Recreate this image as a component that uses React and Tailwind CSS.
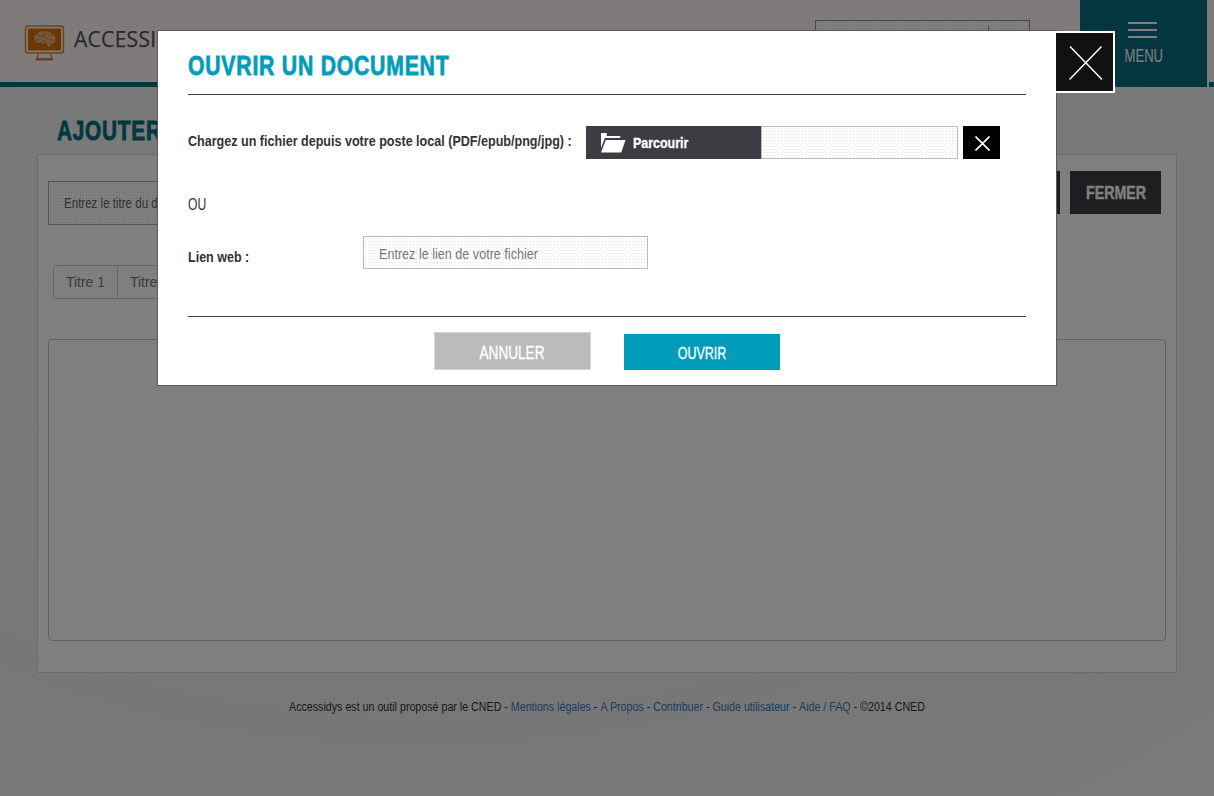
const N = "font-['Liberation_Sans',Arial,sans-serif]";

function T({ className = "", children }) {
  return <span className={`block w-fit whitespace-nowrap ${className}`}>{children}</span>;
}

function Header() {
  return (
    <header className="flex h-[87px] bg-[linear-gradient(#fff7f7_82px,#006c7d_82px)]">
      <div className="flex w-[815px] pl-6 pt-6">
        <svg width="41" height="38" viewBox="0 0 41 38" fill="none">
          <rect x="1.5" y="2" width="38" height="27" rx="2.5" stroke="#e08530" strokeWidth="1.5" />
          <rect x="4" y="4.500" width="33" height="22" fill="#d87000" />
          <path d="M14.500 29.500 13 35M26.500 29.500 28 35" stroke="#e08530" strokeWidth="1.3" />
          <path d="M12 34h17v2.500H12z" fill="#d98232" />
          <path d="M20 7.500c-4-1-6 1-7 3-3 1-4 4-2 6 1 3 4 3 6 2 2 2 4 1 5 0 1 2 2 4.500 4 4.500l1-3.500c3 0 5-2 4-4 1-3-1-5-3-5-1-2-4-4-8-3z" fill="#e0b48c" />
          <path d="M14 12c2-1 3 1 5 0M12 16c2-1 3 1 5-1M20 8.500v4c2 0 3 1 3 3M18 18.500c0-2 3-2 4-1M24 9.500c0 2 2 3 4 2M25 14.500c1 2 3 1 5 2M25 19.500l2-2" stroke="#d87000" strokeWidth=".9" />
        </svg>
        <span className="ml-[9px] mt-[3px] text-[21px] leading-[25px] tracking-[0.3px] text-[#54545c] font-['Open_Sans',sans-serif] [-webkit-text-stroke:0.25px]">ACCESSIDYS</span>
      </div>
      <div className="mt-5 flex h-9 w-[215px] border border-[#8c8c8c] bg-white bg-[radial-gradient(#e0e0e0_0.7px,transparent_0.8px)] bg-[size:3px_3px]">
        <div className="mt-1 h-6 w-[173px] border-r border-[#8c8c8c]" />
      </div>
      <div className="ml-[50px] flex w-[127px] flex-col items-center bg-[#066c80] pt-[22px]">
        <div className="mr-[2px] flex w-[29px] flex-col gap-[5px]">
          <i className="h-[2px] bg-white" /><i className="h-[2px] bg-white" /><i className="h-[2px] bg-white" />
        </div>
        <T className={`mt-[8px] scale-x-[.745] text-[17.5px] leading-[20px] text-white ${N}`}>MENU</T>
      </div>
      <div className="w-[2px] bg-[#fff7f7]" />
    </header>
  );
}

function Page() {
  return (
    <div className="h-[796px] w-[1214px] overflow-hidden bg-[radial-gradient(ellipse_at_35%_45%,#f7f7f7,#f3f3f3_40%,#efefef_60%,#f5f5f5)]">
      <Header />
      <h1 className={`ml-[57px] mt-[29px] h-[38px] w-fit origin-left scale-x-[.77] whitespace-nowrap text-[27px] font-bold leading-[31px] tracking-[1px] text-[#00717f] [-webkit-text-stroke:0.8px] ${N}`}>AJOUTER UN DOCUMENT</h1>
      <main className="ml-[37px] h-[519px] w-[1140px] border border-[#d4d4d4] bg-white">
        <div className="flex justify-between pl-[10px] pr-[15px] pt-[16px]">
          <div className={`mt-[10px] h-[44px] w-[500px] border border-[#aaa] bg-[radial-gradient(#e0e0e0_0.7px,transparent_0.8px)] bg-[size:3px_3px] pl-[15px] text-[15px] leading-[42px] text-[#666] ${N}`}>
            <T className="origin-left scale-x-[.77]">Entrez le titre du document</T>
          </div>
          <div className={`flex gap-[10px] text-[18px] font-bold leading-[44px] text-white ${N}`}>
            <div className="flex h-[43px] w-[140px] justify-center bg-[#3c3d42]"><T className="scale-x-[.79]">ENREGISTRER</T></div>
            <div className="flex h-[43px] w-[91px] justify-center bg-[#3c3d42]"><T className="scale-x-[.79] [-webkit-text-stroke:0.4px]">FERMER</T></div>
          </div>
        </div>
        <div className={`ml-[15px] mt-[40px] flex h-[34px] w-fit rounded-[4px] border border-[#ccc] text-[14px] leading-[32px] text-[#777] ${N}`}>
          <span className="w-[64px] border-r border-[#ccc] text-center">Titre 1</span>
          <span className="w-[64px] border-r border-[#ccc] text-center">Titre 2</span>
          <span className="w-[64px] text-center">Titre 3</span>
        </div>
        <div className="ml-[10px] mt-[40px] h-[302px] w-[1118px] rounded-[4px] border border-[#c2c2c2]" />
      </main>
      <footer className={`mt-[26px] flex scale-x-[.889] justify-center whitespace-pre text-[12px] leading-[16px] text-[#333] ${N}`}>
        Accessidys est un outil proposé par le CNED - <a className="text-[#337ab7]">Mentions légales</a> - <a className="text-[#337ab7]">A Propos</a> - <a className="text-[#337ab7]">Contribuer</a> - <a className="text-[#337ab7]">Guide utilisateur</a> - <a className="text-[#337ab7]">Aide / FAQ</a> - ©2014 CNED
      </footer>
    </div>
  );
}

function Modal() {
  return (
    <section className={`absolute left-[157px] top-[30px] h-[356px] w-[900px] border border-[#5b5959] bg-white bg-clip-padding px-[30px] text-[#333] ${N}`}>
      <button className="absolute left-[898px] top-0 flex h-[62px] w-[59px] items-center justify-center border-y-2 border-r-2 border-white bg-[#111] pl-[2px] pt-[2px]">
        <svg width="34" height="36" viewBox="0 0 34 36" stroke="#fff" strokeWidth="1.5"><path d="M1 1.500 33 34.500M32.500 1.500.5 34.500" /></svg>
      </button>
      <div className="h-[64px] border-b border-[#3c3d42] pt-[20px]">
        <T className="origin-left scale-x-[.785] text-[27px] font-bold leading-[31px] tracking-[1px] text-[#009dbb] [-webkit-text-stroke:0.8px]">OUVRIR UN DOCUMENT</T>
      </div>
      <div className="mt-[31px] flex h-[33px]">
        <div className="w-[398px] shrink-0 pt-[5px]"><T className="origin-left scale-x-[.837] text-[15px] font-bold leading-[20px]">Chargez un fichier depuis votre poste local (PDF/epub/png/jpg) :</T></div>
        <div className="flex w-[175px] shrink-0 items-center bg-[#3c3d42] pl-[15px]">
          <svg width="25" height="20" viewBox="0 0 26 20" preserveAspectRatio="none" fill="#fff"><path d="M0 0h6v3h14v2H4L0 15zM5 7h20.500l-4.500 12.500H0z" /></svg>
          <T className="ml-[7px] origin-left scale-x-[.83] text-[15px] font-bold leading-[20px] text-white [-webkit-text-stroke:0.3px]">Parcourir</T>
        </div>
        <div className="w-[197px] border border-[#bbb] bg-[radial-gradient(#e4e4e4_0.7px,transparent_0.8px)] bg-[size:3px_3px]" />
        <button className="ml-[5px] flex w-[37px] items-center justify-center bg-black pl-px pt-px">
          <svg width="15" height="15" viewBox="0 0 15 15" stroke="#fff" strokeWidth="1.6"><path d="M.5.5 14.500 14.500M14.500.5.5 14.500" /></svg>
        </button>
      </div>
      <T className="mt-[36px] origin-left scale-x-[.76] text-[16px] leading-[20px]">OU</T>
      <div className="mt-[21px] flex h-[33px]">
        <div className="w-[175px] pt-[11px]"><T className="origin-left scale-x-[.835] text-[15px] font-bold leading-[20px]">Lien web :</T></div>
        <div className="w-[285px] border border-[#bbb] bg-[radial-gradient(#e4e4e4_0.7px,transparent_0.8px)] bg-[size:3px_3px] pl-[15px]"><T className="origin-left scale-x-[.84] text-[15px] leading-[34px] text-[#777]">Entrez le lien de votre fichier</T></div>
      </div>
      <div className="mt-[47px] flex border-t border-[#3c3d42] pl-[246px] pt-[15px] text-white">
        <button className="flex h-[38px] w-[157px] items-center justify-center border border-[#d4d4d4] bg-[#bbb] pt-[4px] text-[18px]"><T className="scale-x-[.755] [-webkit-text-stroke:0.3px]">ANNULER</T></button>
        <button className="ml-[33px] mt-[2px] flex h-[36px] w-[156px] items-center justify-center bg-[#009dbb] pt-[3px] text-[17px]"><T className="scale-x-[.735] [-webkit-text-stroke:0.3px]">OUVRIR</T></button>
      </div>
    </section>
  );
}

export default function App() {
  return (
    <div className="relative h-[796px] w-[1214px] overflow-hidden">
      <Page />
      <div className="absolute inset-0 bg-black/50" />
      <Modal />
    </div>
  );
}
